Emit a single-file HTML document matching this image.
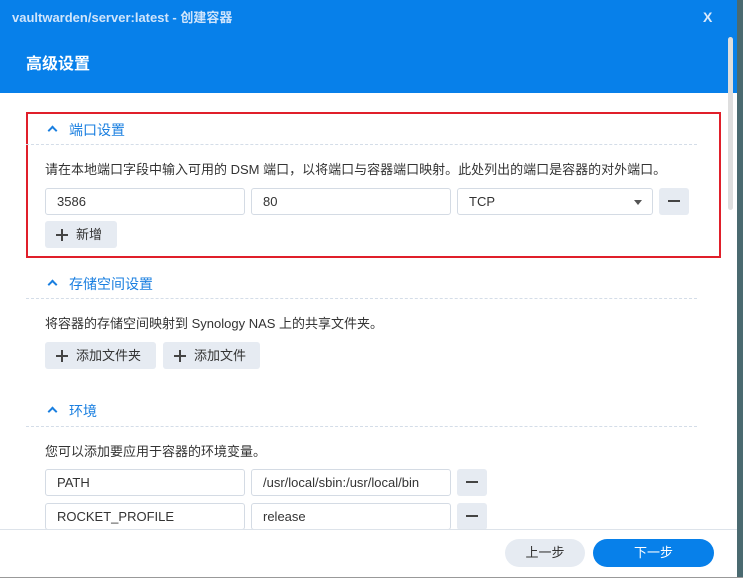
<!DOCTYPE html>
<html><head><meta charset="utf-8"><style>
*{box-sizing:border-box;margin:0;padding:0}
body{width:743px;height:578px;overflow:hidden;background:#4a6a70;font-family:"Liberation Sans","Noto Sans CJK SC",sans-serif;position:relative}
.dlg{position:absolute;left:0;top:0;width:737px;height:577px;background:#fff;overflow:hidden}
.tb{position:absolute;left:0;top:0;width:737px;height:93px;background:#0780ea}
.t1{position:absolute;left:12px;top:7px;color:#cfe4fb;font-size:13px;font-weight:bold}
.x{position:absolute;left:703px;top:9px;color:#dbeafc;font-size:14px;font-weight:bold}
.t2{position:absolute;left:26px;top:50px;color:#fff;font-size:16px;font-weight:bold}
.sb{position:absolute;left:728px;top:37px;width:5px;height:173px;background:#dedede;border-radius:3px}
.a{position:absolute}
.hd{position:absolute;left:45px;color:#1a7fe0;font-size:14px}
.hd:before{content:"";position:absolute;left:4px;top:7px;width:5px;height:5px;border-left:2px solid #1a7fe0;border-top:2px solid #1a7fe0;transform:rotate(45deg)}
.hd span{margin-left:24px}
.dl{position:absolute;left:26px;width:671px;border-top:1px dashed #d4dde8}
.ds{position:absolute;left:45px;font-size:13px;color:#333}
.in{position:absolute;height:27px;border:1px solid #d4dbe4;border-radius:3px;font-size:13px;color:#333;padding:5px 11px;background:#fff;white-space:nowrap;overflow:hidden}
.mb{position:absolute;width:30px;height:27px;background:#e6ebf2;border-radius:3px}
.mb:after{content:"";position:absolute;left:9px;top:12px;width:12px;height:2px;background:#444}
.bt{position:absolute;height:27px;background:#e6ebf2;border-radius:3px;font-size:13px;color:#333;padding:3px 0 0 31px}
.bt:before{content:"";position:absolute;left:11px;top:13px;width:12px;height:2px;background:#444}
.bt:after{content:"";position:absolute;left:16px;top:8px;width:2px;height:12px;background:#444}
</style></head><body>
<div class="dlg">
<div class="tb"><div class="t1">vaultwarden/server:latest - 创建容器</div><div class="x">X</div><div class="t2">高级设置</div></div>
<div class="sb"></div>
<div class="a" style="left:26px;top:112px;width:695px;height:146px;border:2px solid #e01f2a"></div>
<div class="hd" style="top:120px"><span>端口设置</span></div>
<div class="dl" style="top:144px"></div>
<div class="ds" style="top:159px">请在本地端口字段中输入可用的 DSM 端口，以将端口与容器端口映射。此处列出的端口是容器的对外端口。</div>
<div class="in" style="left:45px;top:188px;width:200px">3586</div>
<div class="in" style="left:251px;top:188px;width:200px">80</div>
<div class="in" style="left:457px;top:188px;width:196px">TCP<span style="position:absolute;right:10px;top:11px;border-left:4px solid transparent;border-right:4px solid transparent;border-top:5px solid #555"></span></div>
<div class="mb" style="left:659px;top:188px"></div>
<div class="bt" style="left:45px;top:221px;width:72px">新增</div>
<div class="hd" style="top:274px"><span>存储空间设置</span></div>
<div class="dl" style="top:298px"></div>
<div class="ds" style="top:313px">将容器的存储空间映射到 Synology NAS 上的共享文件夹。</div>
<div class="bt" style="left:45px;top:342px;width:111px">添加文件夹</div>
<div class="bt" style="left:163px;top:342px;width:97px">添加文件</div>
<div class="hd" style="top:401px"><span>环境</span></div>
<div class="dl" style="top:426px"></div>
<div class="ds" style="top:441px">您可以添加要应用于容器的环境变量。</div>
<div class="in" style="left:45px;top:469px;width:200px">PATH</div>
<div class="in" style="left:251px;top:469px;width:200px">/usr/local/sbin:/usr/local/bin</div>
<div class="mb" style="left:457px;top:469px"></div>
<div class="in" style="left:45px;top:503px;width:200px">ROCKET_PROFILE</div>
<div class="in" style="left:251px;top:503px;width:200px">release</div>
<div class="mb" style="left:457px;top:503px"></div>
<div class="a" style="left:0;top:529px;width:737px;height:48px;background:#fff;border-top:1px solid #dde3ea"></div>
<div class="a" style="left:505px;top:539px;width:80px;height:28px;background:#e6ebf2;border-radius:14px;font-size:13px;color:#333;text-align:center;line-height:28px">上一步</div>
<div class="a" style="left:593px;top:539px;width:121px;height:28px;background:#0780ea;border-radius:14px;font-size:13px;color:#fff;text-align:center;line-height:28px">下一步</div>
</div>
<div class="a" style="left:0;top:577px;width:743px;height:1px;background:#999"></div>
</body></html>
